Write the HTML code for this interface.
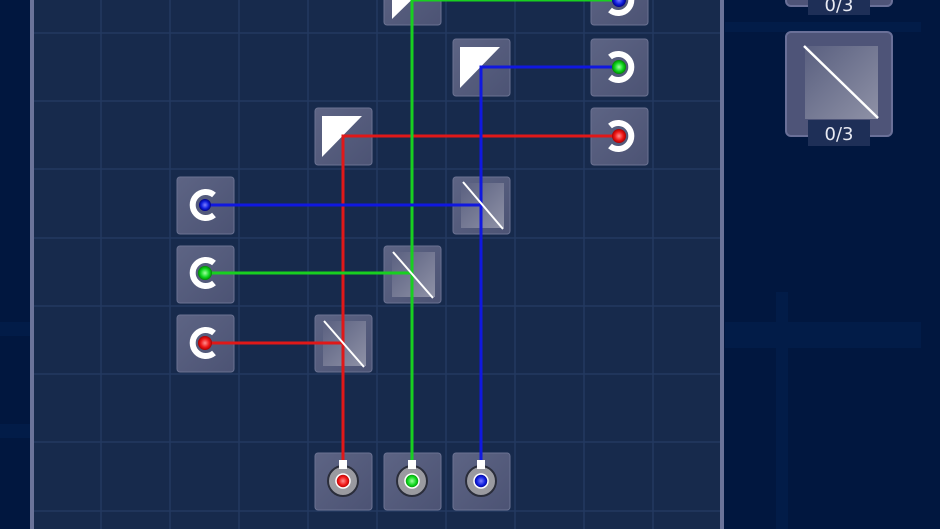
<!DOCTYPE html><html><head><style>
body{margin:0;width:940px;height:529px;overflow:hidden;background:#01173f;position:relative;font-family:"Liberation Sans",sans-serif}
.a{position:absolute}
</style></head><body>
<div class="a" style="left:0;top:322px;width:30px;height:14px;background:#021c48"></div>
<div class="a" style="left:0;top:424px;width:30px;height:14px;background:#021c48"></div>
<div class="a" style="left:725px;top:22px;width:196px;height:10px;background:#021c48"></div>
<div class="a" style="left:725px;top:322px;width:196px;height:26px;background:#021c48"></div>
<div class="a" style="left:776px;top:292px;width:12px;height:237px;background:#021c48"></div>
<svg class="a" style="left:0;top:0" width="940" height="529" viewBox="0 0 940 529">
<defs>
<linearGradient id="tg" x1="0" y1="0" x2="1" y2="1"><stop offset="0" stop-color="#5d6484"/><stop offset="1" stop-color="#4c5374"/></linearGradient>
<linearGradient id="sg" x1="0" y1="0" x2="1" y2="1"><stop offset="0" stop-color="#5a6080"/><stop offset="1" stop-color="#8e91a6"/></linearGradient>
<radialGradient id="rd"><stop offset="0" stop-color="#ff9090"/><stop offset=".6" stop-color="#f01818"/><stop offset="1" stop-color="#a00"/></radialGradient>
<radialGradient id="gd"><stop offset="0" stop-color="#a0ffa0"/><stop offset=".6" stop-color="#10d820"/><stop offset="1" stop-color="#080"/></radialGradient>
<radialGradient id="bd"><stop offset="0" stop-color="#8080ff"/><stop offset=".6" stop-color="#1020e0"/><stop offset="1" stop-color="#008"/></radialGradient>
</defs>
<rect x="30" y="-5" width="694" height="540" fill="#172a4c"/>
<rect x="30" y="-5" width="4" height="540" fill="#6a7399"/>
<rect x="720" y="-5" width="4" height="540" fill="#6a7399"/>
<g stroke="#233960" stroke-width="1.5">
<line x1="101" y1="0" x2="101" y2="529"/><line x1="170" y1="0" x2="170" y2="529"/><line x1="239" y1="0" x2="239" y2="529"/><line x1="308" y1="0" x2="308" y2="529"/><line x1="377" y1="0" x2="377" y2="529"/><line x1="446" y1="0" x2="446" y2="529"/><line x1="515" y1="0" x2="515" y2="529"/><line x1="584" y1="0" x2="584" y2="529"/><line x1="653" y1="0" x2="653" y2="529"/>
<line x1="34" y1="33" x2="720" y2="33"/><line x1="34" y1="101" x2="720" y2="101"/><line x1="34" y1="169" x2="720" y2="169"/><line x1="34" y1="238" x2="720" y2="238"/><line x1="34" y1="306" x2="720" y2="306"/><line x1="34" y1="374" x2="720" y2="374"/><line x1="34" y1="442" x2="720" y2="442"/><line x1="34" y1="511" x2="720" y2="511"/>
</g>
<g fill="url(#tg)" stroke="#6b7292" stroke-width="1">
<rect x="384" y="-32" width="57" height="57" rx="3"/><rect x="591" y="-32" width="57" height="57" rx="3"/>
<rect x="453" y="39" width="57" height="57" rx="3"/><rect x="591" y="39" width="57" height="57" rx="3"/>
<rect x="315" y="108" width="57" height="57" rx="3"/><rect x="591" y="108" width="57" height="57" rx="3"/>
<rect x="177" y="177" width="57" height="57" rx="3"/><rect x="453" y="177" width="57" height="57" rx="3"/>
<rect x="177" y="246" width="57" height="57" rx="3"/><rect x="384" y="246" width="57" height="57" rx="3"/>
<rect x="177" y="315" width="57" height="57" rx="3"/><rect x="315" y="315" width="57" height="57" rx="3"/>
<rect x="315" y="453" width="57" height="57" rx="3"/><rect x="384" y="453" width="57" height="57" rx="3"/><rect x="453" y="453" width="57" height="57" rx="3"/>
</g>
<g fill="#fff">
<polygon points="392,-20 432,-20 392,19"/>
<polygon points="460,47 500,47 460,88"/>
<polygon points="322,116 362,116 322,157"/>
</g>
<g fill="url(#sg)"><rect x="461" y="183" width="43" height="45"/><rect x="392" y="252" width="43" height="45"/><rect x="323" y="321" width="43" height="45"/></g>
<g stroke-width="3" fill="none">
<polyline points="205,343 343,343 343,470" stroke="#e01818"/>
<polyline points="343,470 343,136 619,136" stroke="#e01818"/>
<polyline points="205,273 412,273" stroke="#18d020"/>
<polyline points="412,470 412,0 619,0" stroke="#18d020"/>
<polyline points="205,205 481,205" stroke="#1018e0"/>
<polyline points="481,470 481,67 619,67" stroke="#1018e0"/>
</g>
<g stroke="#fff" stroke-width="2"><line x1="463" y1="182" x2="503" y2="229"/><line x1="393" y1="252" x2="433" y2="298"/><line x1="324" y1="321" x2="364" y2="367"/></g>
<g fill="none" stroke="#fff" stroke-width="6" stroke-linecap="butt">
<path d="M214,195 A13,13 0 1 0 214,215"/><path d="M214,263 A13,13 0 1 0 214,283"/><path d="M214,333 A13,13 0 1 0 214,353"/>
<path d="M610,57 A13,13 0 1 1 610,77"/><path d="M610,126 A13,13 0 1 1 610,146"/><path d="M610,-10 A13,13 0 1 1 610,10"/>
</g>
<circle cx="205" cy="205" r="6" fill="url(#bd)"/><circle cx="205" cy="273" r="7" fill="url(#gd)"/><circle cx="205" cy="343" r="7" fill="url(#rd)"/>
<circle cx="619" cy="67" r="7" fill="url(#gd)"/><circle cx="619" cy="136" r="7" fill="url(#rd)"/><circle cx="619" cy="0" r="7" fill="url(#bd)"/>
<g><circle cx="343" cy="481" r="15" fill="#9a9aa0" stroke="#2a2d3a" stroke-width="2"/><circle cx="343" cy="481" r="7" fill="url(#rd)" stroke="#fff" stroke-width="1.5"/><rect x="339" y="460" width="8" height="9" fill="#fff"/></g>
<g><circle cx="412" cy="481" r="15" fill="#9a9aa0" stroke="#2a2d3a" stroke-width="2"/><circle cx="412" cy="481" r="7" fill="url(#gd)" stroke="#fff" stroke-width="1.5"/><rect x="408" y="460" width="8" height="9" fill="#fff"/></g>
<g><circle cx="481" cy="481" r="15" fill="#9a9aa0" stroke="#2a2d3a" stroke-width="2"/><circle cx="481" cy="481" r="7" fill="url(#bd)" stroke="#fff" stroke-width="1.5"/><rect x="477" y="460" width="8" height="9" fill="#fff"/></g>
<rect x="786" y="-60" width="106" height="66" rx="5" fill="#4e5478" stroke="#6a7098" stroke-width="2"/>
<rect x="808" y="-5" width="62" height="20" fill="#1e2f57"/>
<text x="839" y="11" fill="#e8eaf2" font-size="18" text-anchor="middle" font-family="DejaVu Sans">0/3</text>
<rect x="786" y="32" width="106" height="104" rx="5" fill="#4e5478" stroke="#6a7098" stroke-width="2"/>
<rect x="805" y="46" width="73" height="73" fill="url(#sg)"/>
<line x1="804" y1="46" x2="878" y2="118" stroke="#fff" stroke-width="2.5"/>
<rect x="808" y="120" width="62" height="26" fill="#1e2f57"/>
<text x="839" y="140" fill="#e8eaf2" font-size="18" text-anchor="middle" font-family="DejaVu Sans">0/3</text>
</svg>
</body></html>
